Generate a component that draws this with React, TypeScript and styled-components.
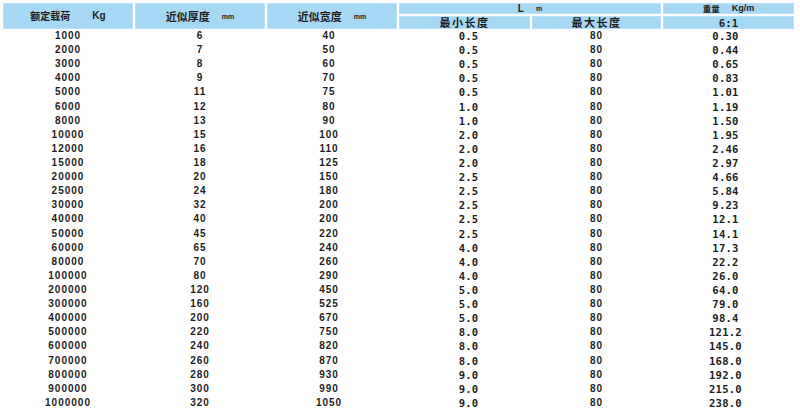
import React from "react";
import styled, { createGlobalStyle } from "styled-components";

const Global = createGlobalStyle`
  html, body { margin: 0; padding: 0; background: #ffffff; }
  body { width: 800px; height: 418px; overflow: hidden; }
`;

const COLS = "130px 130px 130px 131px 129px 131px";

const Page = styled.div`
  width: 800px;
  height: 418px;
  padding: 3px 0 0 3px;
  box-sizing: border-box;
  background: #fff;
  color: #1e1e1e;
`;

const Header = styled.div`
  display: grid;
  grid-template-columns: ${COLS};
  grid-template-rows: 11px 13px;
  column-gap: 2px;
  row-gap: 2px;
`;

const HeadCell = styled.div<{ $col: string; $row: string; $size?: number }>`
  grid-column: ${(p) => p.$col};
  grid-row: ${(p) => p.$row};
  background: #a6d7f4;
  box-shadow: inset 0 0 0 1px #b9e1f7;
  display: flex;
  align-items: center;
  justify-content: center;
  font-family: "Noto Sans CJK SC", "Liberation Sans", sans-serif;
  font-weight: 700;
  font-size: ${(p) => p.$size ?? 10.5}px;
  line-height: 1;
  white-space: nowrap;
`;

const Unit = styled.span<{ $size: number; $gap: number }>`
  font-family: "Liberation Sans", Arial, sans-serif;
  font-weight: 700;
  font-size: ${(p) => p.$size}px;
  margin-left: ${(p) => p.$gap}px;
`;

const Spaced = styled.span<{ $ls: number }>`
  letter-spacing: ${(p) => p.$ls}px;
`;

const Body = styled.div`
  display: flex;
  flex-direction: column;
`;

const Row = styled.div`
  display: grid;
  grid-template-columns: ${COLS};
  column-gap: 2px;
  height: 14.12px;
  align-items: center;
`;

const Cell = styled.div<{ $mono?: boolean; $shift?: number }>`
  text-align: center;
  font-family: ${(p) =>
    p.$mono ? `"DejaVu Sans Mono", "Liberation Mono", monospace` : `"Liberation Sans", Arial, sans-serif`};
  font-weight: 700;
  font-size: ${(p) => (p.$mono ? 10.6 : 10)}px;
  letter-spacing: ${(p) => (p.$mono ? 0.2 : 1)}px;
  line-height: 14px;
  color: #1e1e1e;
  transform: translateX(${(p) => p.$shift ?? 0}px);
`;

const rows: [string, string, string, string, string, string][] = [
  ["1000", "6", "40", "0.5", "80", "0.30"],
  ["2000", "7", "50", "0.5", "80", "0.44"],
  ["3000", "8", "60", "0.5", "80", "0.65"],
  ["4000", "9", "70", "0.5", "80", "0.83"],
  ["5000", "11", "75", "0.5", "80", "1.01"],
  ["6000", "12", "80", "1.0", "80", "1.19"],
  ["8000", "13", "90", "1.0", "80", "1.50"],
  ["10000", "15", "100", "2.0", "80", "1.95"],
  ["12000", "16", "110", "2.0", "80", "2.46"],
  ["15000", "18", "125", "2.0", "80", "2.97"],
  ["20000", "20", "150", "2.5", "80", "4.66"],
  ["25000", "24", "180", "2.5", "80", "5.84"],
  ["30000", "32", "200", "2.5", "80", "9.23"],
  ["40000", "40", "200", "2.5", "80", "12.1"],
  ["50000", "45", "220", "2.5", "80", "14.1"],
  ["60000", "65", "240", "4.0", "80", "17.3"],
  ["80000", "70", "260", "4.0", "80", "22.2"],
  ["100000", "80", "290", "4.0", "80", "26.0"],
  ["200000", "120", "450", "5.0", "80", "64.0"],
  ["300000", "160", "525", "5.0", "80", "79.0"],
  ["400000", "200", "670", "5.0", "80", "98.4"],
  ["500000", "220", "750", "8.0", "80", "121.2"],
  ["600000", "240", "820", "8.0", "80", "145.0"],
  ["700000", "260", "870", "8.0", "80", "168.0"],
  ["800000", "280", "930", "9.0", "80", "192.0"],
  ["900000", "300", "990", "9.0", "80", "215.0"],
  ["1000000", "320", "1050", "9.0", "80", "238.0"],
];

export default function App() {
  return (
    <Page>
      <Global />
      <Header>
        <HeadCell $col="1" $row="1 / 3" $size={10}>
          <span>额定载荷</span>
          <Unit $size={10} $gap={22}>Kg</Unit>
        </HeadCell>
        <HeadCell $col="2" $row="1 / 3" $size={11}>
          <span>近似厚度</span>
          <Unit $size={7} $gap={12}>mm</Unit>
        </HeadCell>
        <HeadCell $col="3" $row="1 / 3" $size={11}>
          <span>近似宽度</span>
          <Unit $size={7} $gap={12}>mm</Unit>
        </HeadCell>
        <HeadCell $col="4 / 6" $row="1" $size={10}>
          <Unit $size={10} $gap={0}>L</Unit>
          <Unit $size={7} $gap={12}>m</Unit>
        </HeadCell>
        <HeadCell $col="6" $row="1" $size={8.5}>
          <span>重量</span>
          <Unit $size={9} $gap={12}>Kg/m</Unit>
        </HeadCell>
        <HeadCell $col="4" $row="2" $size={11}>
          <Spaced $ls={1.5}>最小长度</Spaced>
        </HeadCell>
        <HeadCell $col="5" $row="2" $size={11}>
          <Spaced $ls={1.5}>最大长度</Spaced>
        </HeadCell>
        <HeadCell $col="6" $row="2" $size={10.6}>
          <Cell $mono as="span">6:1</Cell>
        </HeadCell>
      </Header>
      <Body>
        {rows.map((r) => (
          <Row key={r[0]}>
            <Cell>{r[0]}</Cell>
            <Cell>{r[1]}</Cell>
            <Cell $shift={-3}>{r[2]}</Cell>
            <Cell $mono $shift={4}>{r[3]}</Cell>
            <Cell>{r[4]}</Cell>
            <Cell $mono $shift={-3}>{r[5]}</Cell>
          </Row>
        ))}
      </Body>
    </Page>
  );
}
